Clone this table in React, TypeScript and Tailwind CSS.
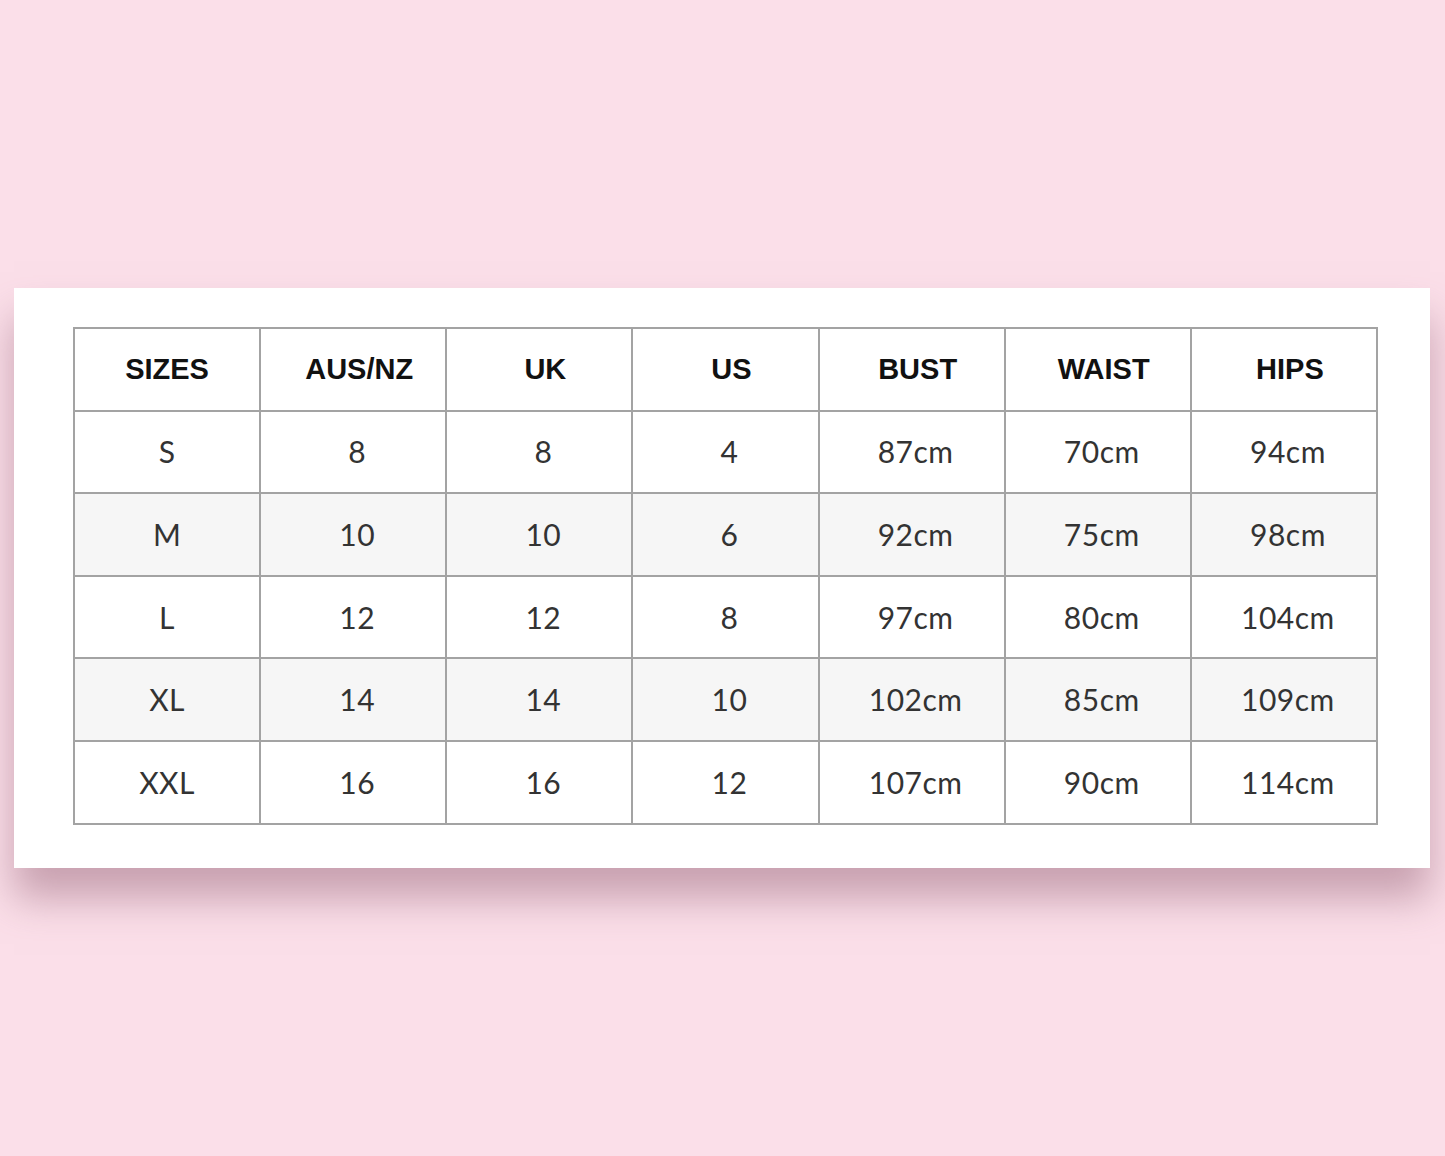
const headers = ["SIZES", "AUS/NZ", "UK", "US", "BUST", "WAIST", "HIPS"];

const rows = [
  ["S", "8", "8", "4", "87cm", "70cm", "94cm"],
  ["M", "10", "10", "6", "92cm", "75cm", "98cm"],
  ["L", "12", "12", "8", "97cm", "80cm", "104cm"],
  ["XL", "14", "14", "10", "102cm", "85cm", "109cm"],
  ["XXL", "16", "16", "12", "107cm", "90cm", "114cm"],
];

export default function App() {
  return (
    <div className="min-h-[1156px] w-[1445px] bg-[#fbdfe9] pt-[288px] pl-[14px]">
      <div className="w-[1416px] h-[580px] bg-white pt-[39px] pl-[59px] shadow-[0_30px_38px_rgba(150,100,120,0.5)]">
        <table className="w-[1305px] border-collapse table-fixed">
          <thead>
            <tr className="h-[82.6px]">
              {headers.map((h, j) => (
                <th
                  key={h}
                  className={`border-2 border-[#a3a3a3] text-center text-[29px] font-bold text-[#111111] ${j === 0 ? "" : "pl-3"}`}
                  style={{ fontFamily: "'Liberation Sans', Arial, sans-serif" }}
                >
                  {h}
                </th>
              ))}
            </tr>
          </thead>
          <tbody>
            {rows.map((r, i) => (
              <tr key={r[0]} className={`h-[82.6px] ${i % 2 === 1 ? "bg-[#f6f6f6]" : "bg-white"}`}>
                {r.map((c, j) => (
                  <td
                    key={j}
                    className={`border-2 border-[#a3a3a3] text-center text-[30px] text-[#333333] tracking-[0.5px] ${j === 0 ? "" : "pl-2"}`}
                    style={{ fontFamily: "Lato, 'Open Sans', sans-serif" }}
                  >
                    {c}
                  </td>
                ))}
              </tr>
            ))}
          </tbody>
        </table>
      </div>
    </div>
  );
}
